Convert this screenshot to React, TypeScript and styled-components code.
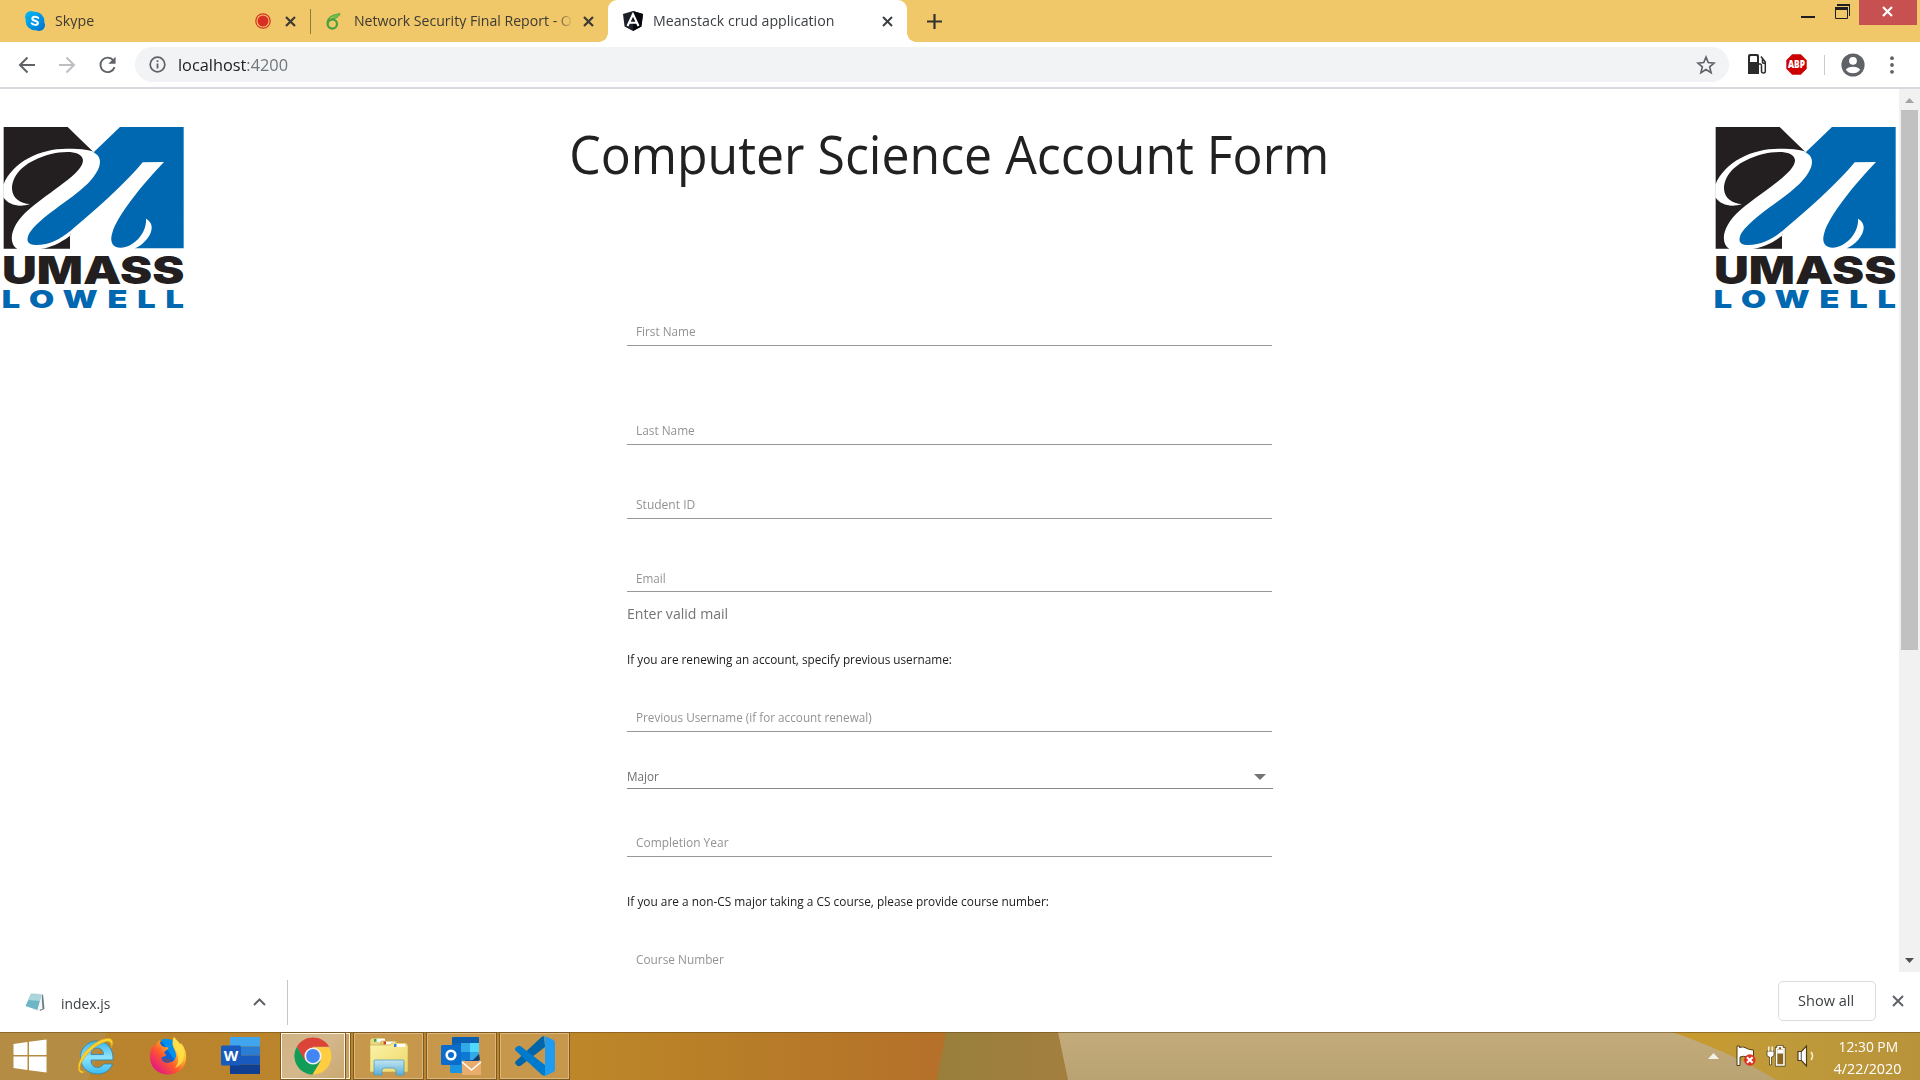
import React from "react";
import styled, { createGlobalStyle } from "styled-components";

const GlobalStyle = createGlobalStyle`
  * { box-sizing: border-box; }
  html, body { margin: 0; padding: 0; overflow: hidden; background: #fff; }
  body { font-family: "Open Sans", "Noto Sans", sans-serif; color: #212121; }
  svg { display: block; flex: none; }
`;

const Screen = styled.div`
  width: 1920px;
  height: 1080px;
  display: flex;
  flex-direction: column;
  overflow: hidden;
`;

const Text = styled.span<{ $size: number; $stretch?: number; $color?: string; $weight?: number }>`
  display: inline-block;
  font-size: ${(p) => p.$size}px;
  font-weight: ${(p) => p.$weight ?? 400};
  line-height: 20px;
  white-space: pre;
  color: ${(p) => p.$color ?? "#212121"};
  transform: scaleX(${(p) => p.$stretch ?? 1});
  transform-origin: left center;
`;

/* ---------- tab strip ---------- */

const TabStrip = styled.header`
  height: 42px;
  flex: none;
  display: flex;
  background: #f0c869;
`;

const Tab = styled.div<{ $width: number; $pad: number; $active?: boolean }>`
  position: relative;
  width: ${(p) => p.$width}px;
  height: 42px;
  padding-left: ${(p) => p.$pad}px;
  display: flex;
  align-items: center;
  background: ${(p) => (p.$active ? "#fff" : "transparent")};
  border-radius: ${(p) => (p.$active ? "9px 9px 0 0" : "0")};
  &::before, &::after {
    content: "";
    display: ${(p) => (p.$active ? "block" : "none")};
    position: absolute;
    bottom: 0;
    width: 9px;
    height: 9px;
  }
  &::before { left: -9px; background: radial-gradient(circle at 0 0, transparent 8.5px, #fff 9px); }
  &::after { right: -9px; background: radial-gradient(circle at 100% 0, transparent 8.5px, #fff 9px); }
`;

const TabLabel = styled.div<{ $width: number; $gap: number; $fade?: boolean }>`
  width: ${(p) => p.$width}px;
  margin-left: ${(p) => p.$gap}px;
  height: 20px;
  margin-top: -4px;
  overflow: hidden;
  ${(p) => p.$fade && "mask-image: linear-gradient(90deg, #000 93%, transparent 101%);"}
`;

const FileName = styled.div`
  width: 192px;
  height: 20px;
`;

const TabDivider = styled.div`
  width: 1px;
  height: 25px;
  margin: 9px 0 0;
  background: #8f7842;
`;

const Spacer = styled.div<{ $w?: number }>`
  ${(p) => (p.$w ? `width: ${p.$w}px; flex: none;` : "flex: 1;")}
`;

const NewTab = styled.div`
  display: flex;
  align-items: center;
  padding-left: 20px;
`;

const WindowControls = styled.div`
  display: flex;
  align-items: flex-start;
`;

const CloseWindow = styled.div`
  width: 58px;
  height: 25px;
  margin: 0 3px 0 9px;
  padding: 0 1px 2px 0;
  background: #c75050;
  display: flex;
  align-items: center;
  justify-content: center;
`;

const Cross = ({ size, color, weight }: { size: number; color: string; weight: number }) => (
  <svg width={size} height={size} viewBox={`0 0 ${size} ${size}`}>
    <path d={`M1 1L${size - 1} ${size - 1}M${size - 1} 1L1 ${size - 1}`} stroke={color} strokeWidth={weight} />
  </svg>
);

const SkypeIcon = () => (
  <svg width="20" height="20" viewBox="0 0 20 20">
    <defs>
      <linearGradient id="sky" x1="0" y1="0" x2="1" y2="1">
        <stop offset="0" stopColor="#00b7f0" />
        <stop offset="1" stopColor="#0078d4" />
      </linearGradient>
    </defs>
    <circle cx="6" cy="6" r="6" fill="#00b2ee" />
    <circle cx="14" cy="14" r="6" fill="#0078d4" />
    <circle cx="10" cy="10" r="9.3" fill="url(#sky)" />
    <path d="M13.2 6.9c-.9-1.2-5.6-1.9-5.9.6-.3 2.7 6 1.7 5.7 4.7-.3 2.4-4.9 2-6.3.2" fill="none" stroke="#fff" strokeWidth="2" strokeLinecap="round" />
  </svg>
);

const RecordIcon = () => (
  <svg width="16" height="16" viewBox="0 0 16 16">
    <circle cx="8" cy="8" r="7.2" fill="none" stroke="#d93025" strokeWidth="1.2" />
    <circle cx="8" cy="8" r="5.5" fill="#d93025" />
  </svg>
);

const OverleafIcon = () => (
  <svg width="15" height="17" viewBox="0 0 15 17">
    <circle cx="6.3" cy="11" r="4.700" fill="none" stroke="#47a141" strokeWidth="2.200" />
    <path d="M1.500 10.500C1 6 5 2 14 1C12 2 12 3.700 10.200 4.600C8 5.600 5.500 5 3.500 8" fill="none" stroke="#47a141" strokeWidth="1.500" />
    <path d="M5 4C8 1.600 11 1.200 14 1C12 2.400 12 4 9 5Z" fill="#6cc04a" />
  </svg>
);

const AngularIcon = () => (
  <svg width="20" height="20" viewBox="0 0 20 20">
    <path d="M10 0L20 3L18.4 15.5L10 20L1.6 15.5L0 3Z" fill="#1b2029" />
    <path d="M10 0L20 3L18.4 15.5L10 20Z" fill="#05070c" />
    <path d="M4.500 15L10 3.300L15.500 15M6.800 11.700H13.200" fill="none" stroke="#fff" strokeWidth="2.100" />
  </svg>
);

/* ---------- toolbar ---------- */

const Toolbar = styled.div`
  height: 47px;
  flex: none;
  display: flex;
  align-items: center;
  border-bottom: 2px solid #d9dae0;
  background: #fff;
`;

const NavButtons = styled.div`
  width: 135px;
  display: flex;
  align-items: center;
  gap: 22px;
  padding-left: 18px;
`;

const Omnibox = styled.div`
  width: 1594px;
  height: 35px;
  display: flex;
  align-items: center;
  border-radius: 18px;
  background: #f1f3f4;
  padding: 0 13px 0 14px;
`;

const ToolDivider = styled.div`
  width: 1px;
  height: 20px;
  background: #c9cbce;
`;

const Arrow = ({ color, flip }: { color: string; flip?: boolean }) => (
  <svg width="18" height="18" viewBox="0 0 18 18">
    <path
      d="M17 9H2.500M9.500 1.500L2 9L9.500 16.500"
      fill="none"
      stroke={color}
      strokeWidth="2"
      transform={flip ? "matrix(-1 0 0 1 18 0)" : undefined}
    />
  </svg>
);

const ReloadIcon = () => (
  <svg width="19" height="20" viewBox="0 0 20 20">
    <path d="M16.200 5.200A7.600 7.600 0 1 0 17.400 12.200" fill="none" stroke="#5f6368" strokeWidth="2" />
    <path d="M18.500 1.200V8.800H10.900Z" fill="#5f6368" />
  </svg>
);

const InfoIcon = () => (
  <svg width="17" height="17" viewBox="0 0 17 17">
    <circle cx="8.500" cy="8.500" r="7.300" fill="none" stroke="#5f6368" strokeWidth="1.700" />
    <path d="M8.500 7.500V12.600M8.500 4.300V6.100" stroke="#5f6368" strokeWidth="1.800" />
  </svg>
);

const StarIcon = () => (
  <svg width="20" height="20" viewBox="0 0 24 24">
    <path
      d="M12 2.600L14.700 9.100L21.800 9.700L16.400 14.300L18.100 21.200L12 17.500L5.900 21.200L7.600 14.300L2.200 9.700L9.300 9.100Z"
      fill="none"
      stroke="#5f6368"
      strokeWidth="2"
    />
  </svg>
);

const PumpIcon = () => (
  <svg width="19" height="21" viewBox="0 0 19 21">
    <path d="M2 0H9Q11 0 11 2V20H0V2Q0 0 2 0Z" fill="#2b2b2b" />
    <path d="M2 3Q2 2 3 2H8Q9 2 9 3V8H2Z" fill="#fff" />
    <path d="M11 10H12.500Q13.500 10 13.500 12V17Q13.500 19 15.500 19T17.300 17V8L13 2.500M14.500 5V8Q14.500 9.500 17.300 9.500" fill="none" stroke="#2b2b2b" strokeWidth="1.500" />
  </svg>
);

const AbpIcon = () => (
  <svg width="21" height="21" viewBox="0 0 21 21">
    <path d="M6.200 0.300H14.800L20.700 6.200V14.800L14.800 20.700H6.200L0.300 14.800V6.200Z" fill="#cc0000" />
    <text x="10.500" y="14.200" textAnchor="middle" textLength="17" lengthAdjust="spacingAndGlyphs" fontFamily="Open Sans, sans-serif" fontWeight="800" fontSize="10.500" fill="#fff">ABP</text>
  </svg>
);

const AvatarIcon = () => (
  <svg width="24" height="24" viewBox="0 0 24 24">
    <circle cx="12" cy="12" r="11.600" fill="#5f6368" />
    <circle cx="12" cy="7.800" r="3.900" fill="#fff" />
    <path d="M4.800 16.800Q7 13.800 12 13.800T19.200 16.800Q16.500 20.300 12 20.300T4.800 16.800Z" fill="#fff" />
  </svg>
);

const DotsIcon = () => (
  <svg width="4" height="18" viewBox="0 0 4 18">
    {[2.2, 9, 15.8].map((y) => (
      <circle key={y} cx="2" cy={y} r="1.900" fill="#5f6368" />
    ))}
  </svg>
);

/* ---------- page ---------- */

const Viewport = styled.main`
  height: 883px;
  flex: none;
  display: flex;
  background: #fff;
`;

const Page = styled.div`
  width: 1899px;
  height: 883px;
  overflow: hidden;
`;

const PageHeader = styled.div`
  height: 226px;
  display: flex;
  justify-content: space-between;
  padding-top: 30px;
`;

const LogoBox = styled.div`
  width: 187px;
  padding-top: 6px;
`;

const Title = styled.h1`
  margin: 0;
  font-size: 52.5px;
  font-weight: 400;
  line-height: 70px;
  white-space: nowrap;
  color: #212121;
  transform: scaleX(0.952);
`;

const Form = styled.form`
  width: 646px;
  margin-left: 627px;
`;

const Field = styled.div<{ $gap: number; $height?: number }>`
  width: 645px;
  height: ${(p) => p.$height ?? 25}px;
  margin-top: ${(p) => p.$gap}px;
  padding-left: 9px;
  border-bottom: 1px solid #979797;
  display: flex;
  align-items: flex-start;
`;

const SelectField = styled.div`
  height: 24px;
  margin-top: 33px;
  padding: 0 7px 2px 0;
  border-bottom: 1px solid #8a8a8a;
  display: flex;
  align-items: center;
  justify-content: space-between;
  & > svg { margin-top: 2px; }
`;

const Note = styled.div<{ $gap: number }>`
  height: 20px;
  margin-top: ${(p) => p.$gap}px;
  display: flex;
`;

const Scrollbar = styled.div`
  width: 21px;
  display: flex;
  flex-direction: column;
  align-items: center;
  justify-content: space-between;
  background: #f1f1f1;
  padding: 9px 0 9px;
`;

const Thumb = styled.div`
  width: 17px;
  height: 540px;
  margin: 7px 0 auto;
  background: #c1c1c1;
`;

const Triangle = ({ w, h, color, down }: { w: number; h: number; color: string; down?: boolean }) => (
  <svg width={w} height={h} viewBox={`0 0 ${w} ${h}`}>
    <path d={down ? `M0 0H${w}L${w / 2} ${h}Z` : `M0 ${h}H${w}L${w / 2} 0Z`} fill={color} />
  </svg>
);

const UmassLogo = () => (
  <svg width="187" height="185" viewBox="0 45 561 555">
    <path d="M11 51H203L281 127L210 377V416H11Z" fill="#231f20" />
    <path
      d="M10 224C38 155 120 116 200 116C250 116 272 120 281 126L298 150L210 377C178 402 150 412 122 417H52C25 400 28 350 85 300C150 243 250 190 249 150C245 122 195 122 150 133C80 152 36 190 36 237C38 265 60 281 90 282C60 292 28 288 10 262Z"
      fill="#fff"
    />
    <path
      d="M360 51H551V415H404C440 402 478 348 438 326C441 370 400 412 362 413C338 413 328 396 337 368C352 318 425 225 492 156L428 157C395 200 300 290 212 362C180 388 150 404 108 405C84 405 76 394 88 370C120 320 210 272 262 222C296 188 310 155 292 135L281 127Z"
      fill="#0067b1"
    />
    <text x="6" y="521" textLength="547" lengthAdjust="spacingAndGlyphs" fontFamily="Inter, Liberation Sans, sans-serif" fontWeight="900" fontSize="113" fill="#231f20">UMASS</text>
    <text transform="translate(5 594) scale(1.32 1)" textLength="414" lengthAdjust="spacing" fontFamily="Inter, Liberation Sans, sans-serif" fontWeight="900" fontSize="74" fill="#0067b1">LOWELL</text>
  </svg>
);

/* ---------- download shelf ---------- */

const Shelf = styled.div`
  height: 60px;
  flex: none;
  display: flex;
  align-items: center;
  padding-left: 25px;
  background: #fff;
`;

const ShelfDivider = styled.div`
  width: 1px;
  height: 45px;
  margin-left: 21px;
  background: #c6c6c6;
`;

const ShowAll = styled.div`
  width: 98px;
  height: 40px;
  margin: 0 16px 3px 0;
  padding: 0 0 2px 19px;
  display: flex;
  align-items: center;
  border: 1px solid #dadce0;
  border-radius: 5px;
`;

const CloseShelf = styled.div`
  margin: 0 16px 2px 0;
`;

const NotepadIcon = () => (
  <svg width="20" height="20" viewBox="0 0 20 20">
    <path d="M6 1L18 2L19 16L14 19L1 14Z" fill="#d9e5e8" />
    <path d="M18 2L19.500 17L15 19L17 4Z" fill="#6f7d80" />
    <path d="M6 2L16.500 3L12.500 18L0.500 14Z" fill="#6fb6c4" />
    <path d="M6 2L16.500 3L15 9L3.500 8Z" fill="#a9d7dd" />
    <path d="M12.500 18L16.500 4L17.500 17Z" fill="#f6f6f6" />
  </svg>
);

/* ---------- taskbar ---------- */

const TaskbarRoot = styled.footer`
  position: relative;
  height: 48px;
  flex: none;
  display: flex;
  overflow: hidden;
`;

const Wallpaper = styled.svg`
  position: absolute;
  inset: 0;
`;

const Launchers = styled.div`
  position: relative;
  width: 280px;
  padding: 0 0 1px 13px;
  display: flex;
  align-items: center;
`;

const TaskButton = styled.div<{ $active?: boolean; $width: number }>`
  position: relative;
  width: ${(p) => p.$width}px;
  height: 48px;
  margin-right: ${(p) => (p.$active ? 0 : 2)}px;
  display: flex;
  align-items: center;
  justify-content: center;
  border: 1px solid #7d5a22;
  box-shadow: inset 0 0 0 1px ${(p) => (p.$active ? "#fff4dc" : "#dcb67c")};
  background: ${(p) => (p.$active ? "linear-gradient(135deg, #d0b284, #d4b88c 50%, #c9a76f)" : "rgba(210, 170, 110, 0.5)")};
`;

const StackEdge = styled.div`
  position: relative;
  width: 5px;
  height: 48px;
  margin-right: 2px;
  border: 1px solid #7d5a22;
  border-left: 0;
  box-shadow: inset -1px 0 0 #fff4dc, inset 0 1px 0 #fff4dc, inset 0 -1px 0 #fff4dc;
  background: #c7a065;
`;

const Tray = styled.div`
  position: relative;
  display: flex;
  align-items: center;
  margin-left: auto;
  padding-right: 17px;
`;

const Clock = styled.div`
  width: 70px;
  padding-top: 2px;
  display: flex;
  flex-direction: column;
  align-items: center;
  gap: 2px;
  & > span { transform-origin: center; }
`;

const WindowsIcon = () => (
  <svg width="34" height="34" viewBox="0 0 34 34">
    <path d="M0.500 5L14.500 3V16H0.500ZM16 2.800L33.500 0.500V16H16ZM0.500 17.500H14.500V31L0.500 29ZM16 17.500H33.500V33.500L16 31.200Z" fill="#fff" />
  </svg>
);

const IeIcon = () => (
  <svg width="38" height="38" viewBox="0 0 38 38">
    <defs>
      <linearGradient id="ie" x1="0" y1="0" x2="0" y2="1">
        <stop offset="0" stopColor="#3db4ea" />
        <stop offset="0.500" stopColor="#8fe3fb" />
        <stop offset="1" stopColor="#3bbcf0" />
      </linearGradient>
    </defs>
    <path
      d="M37 23H15C15 28 18 30.500 21.500 30.500C24.500 30.500 26.500 29 27.500 27H36.500C34 33.500 28.500 37 21.500 37C12 37 4.500 30 4.500 20.500C4.500 11 12 4 21 4C31 4 37.500 11.500 37 23ZM15 17.500H27.500C27.500 13.500 25 11 21.300 11C17.500 11 15 13.500 15 17.500Z"
      fill="url(#ie)"
      stroke="#2287bd"
      strokeWidth="0.800"
    />
    <path d="M5 36C-1 33 3 20 13 11C22 2.500 33 -1 36 3C37.500 5 37 7.500 35 11C36 6 34 3.500 29 5C18 8 5 22 4 30C3.500 33 5 35 9 34.500C7.500 36 6 36.300 5 36Z" fill="#fbd32f" stroke="#d59a14" strokeWidth="0.600" />
  </svg>
);

const FirefoxIcon = () => (
  <svg width="38" height="38" viewBox="0 0 38 38">
    <defs>
      <linearGradient id="ff" x1="1" y1="0" x2="0.150" y2="0.900">
        <stop offset="0.100" stopColor="#fff44f" />
        <stop offset="0.400" stopColor="#ffb02a" />
        <stop offset="0.650" stopColor="#ff5a2a" />
        <stop offset="1" stopColor="#e31587" />
      </linearGradient>
    </defs>
    <circle cx="19" cy="17" r="14" fill="#0a64d8" />
    <path d="M12 3Q18 0 25 4L30 12L26 24Z" fill="#0090ed" />
    <path
      d="M25 0C28 4 30 6 31 8L32 6C36 11 37.500 16 37.200 21C36.500 31 29 37.500 19 37.500C9 37.500 1.500 30.500 1 21C0.800 15 2 10 5 7L6 11C6.500 8 8 5 10.500 3C10.500 6 12 8.500 14 9.500C16 10.300 18 10 19.500 10.700C19 13 16 13.500 15.500 15C15.200 17 17 17 17 18.500C16 20 12.500 19 12.500 21.500C13 25 17 26.500 20 25.500C24 25.500 27 22.500 27 18.500C27 13 23 10 23.500 6C23.500 3.500 24 1.500 25 0Z"
      fill="url(#ff)"
    />
    <path d="M25 0C29 5 35 8 35 18C35 25 31 29 26 31C29 27 30 23 28.500 18C27 12 22 9 25 0Z" fill="#ffe24a" opacity="0.850" />
    <path d="M13 21.500C14 25.500 20 26.500 24 23C21 24 20 20.500 13 21.500Z" fill="#b8341d" opacity="0.500" />
  </svg>
);

const WordIcon = () => (
  <svg width="39" height="37" viewBox="0 0 39 37">
    <rect x="9" y="0" width="30" height="9.500" fill="#41a5ee" />
    <rect x="9" y="9.500" width="30" height="9" fill="#2b7cd3" />
    <rect x="9" y="18.500" width="30" height="9" fill="#185abd" />
    <rect x="9" y="27.500" width="30" height="9.500" fill="#103f91" />
    <rect x="0" y="8.500" width="20" height="20" rx="1.500" fill="#185abd" />
    <text x="10" y="24" textAnchor="middle" fontFamily="Open Sans, sans-serif" fontWeight="700" fontSize="15" fill="#fff">W</text>
  </svg>
);

const ChromeIcon = () => (
  <svg width="38" height="38" viewBox="0 0 38 38">
    <path d="M2.900 9.700A18.600 18.600 0 0 1 35.100 9.700H19L10.500 24Z" fill="#db4437" />
    <path d="M2.900 9.700A18.600 18.600 0 0 0 19 37.600L27 24L11 23.500Z" fill="#0f9d58" />
    <path d="M35.100 10.200A18.600 18.600 0 0 1 18.500 37.600L27 23.500L20 10.200Z" fill="#ffcd40" />
    <circle cx="19" cy="19" r="8.600" fill="#f1f1f1" />
    <circle cx="19" cy="19" r="6.900" fill="#4285f4" />
  </svg>
);

const ExplorerIcon = () => (
  <svg width="40" height="39" viewBox="0 0 40 39">
    <defs>
      <linearGradient id="folder" x1="0" y1="0" x2="1" y2="1">
        <stop offset="0" stopColor="#fbf3a8" />
        <stop offset="1" stopColor="#edd768" />
      </linearGradient>
      <linearGradient id="dock" x1="0" y1="0" x2="0" y2="1">
        <stop offset="0" stopColor="#c4e6f3" />
        <stop offset="1" stopColor="#5aaed6" />
      </linearGradient>
    </defs>
    <path d="M3 1H15L17 4H28V10H1V3Z" fill="#e9d782" stroke="#b9a04a" strokeWidth="0.600" />
    <rect x="6" y="1.800" width="10" height="3" fill="#fff" />
    <rect x="5" y="1.800" width="2.500" height="3" fill="#37a84a" />
    <path d="M12 4H26L28 6H38V14H12Z" fill="#ead77c" stroke="#b9a04a" strokeWidth="0.600" />
    <rect x="16" y="4.800" width="10" height="2.800" fill="#fff" />
    <rect x="14.500" y="4.500" width="2.500" height="3" fill="#d83a25" />
    <path d="M1 8H21L23 6H37L39 9V35H1Z" fill="url(#folder)" stroke="#c0a547" strokeWidth="0.600" />
    <rect x="26" y="7" width="10" height="3" fill="#fff" />
    <rect x="25" y="7" width="2.500" height="3" fill="#2e86d1" />
    <path d="M5 24Q5 23 6 23H34Q35 23 35 24V38H27V34Q27 31 24 31H16Q13 31 13 34V38H5Z" fill="url(#dock)" stroke="#4e9dc2" strokeWidth="0.800" />
  </svg>
);

const OutlookIcon = () => (
  <svg width="41" height="39" viewBox="0 0 41 39">
    <rect x="11" y="0" width="27" height="24" rx="1" fill="#0a5fb0" />
    <rect x="11" y="6" width="9" height="9" fill="#1066b5" />
    <rect x="20" y="6" width="9" height="9" fill="#32a9e7" />
    <rect x="29" y="6" width="9" height="9" fill="#50d9ff" />
    <rect x="20" y="15" width="9" height="8" fill="#0f78d4" />
    <rect x="29" y="15" width="9" height="8" fill="#32a9e7" />
    <path d="M9 23H24V36H10Q9 36 9 35Z" fill="#1a93e0" />
    <rect x="0" y="8" width="20" height="20" rx="1.500" fill="#0b6ccc" />
    <circle cx="10" cy="18" r="4.300" fill="none" stroke="#fff" strokeWidth="2.600" />
    <path d="M38 17L39 23L31 24Z" fill="#123b6b" />
    <rect x="21" y="24" width="19" height="14" fill="#e8ad6d" />
    <path d="M21 25L30.500 33L40 25" fill="none" stroke="#fff" strokeWidth="1.600" />
  </svg>
);

const VsCodeIcon = () => (
  <svg width="40" height="40" viewBox="0 0 40 40">
    <path d="M29 0L30 11L6 29.500Q4 31 2 29.500L0.500 28Q-0.500 26.500 1 25L26.500 1Z" fill="#0065a9" />
    <path d="M0.500 12L2 10.500Q4 9 6 10.500L30 29V40L27 39L1 15Q-0.500 13.500 0.500 12Z" fill="#007acc" />
    <path d="M29 0.200Q30 0 31 0.500L38.500 4Q40 5 40 6.500V33.500Q40 35 38.500 36L31 39.500Q30 40 29 39.800Q30 39 30 37V3Q30 1 29 0.200Z" fill="#1f9cf0" />
  </svg>
);

const FlagIcon = () => (
  <svg width="20" height="22" viewBox="0 0 20 22">
    <path d="M1 1H3.500V2.500Q7 1 10 3T17.500 5V13Q13 13.500 10.500 12T4 12V20.500H1Z" fill="#fff" stroke="#4f3d15" strokeWidth="1" />
    <circle cx="13.800" cy="15" r="5.700" fill="#dd3327" />
    <path d="M11 12.200L16.600 17.800M16.600 12.200L11 17.800" stroke="#fff" strokeWidth="2" />
  </svg>
);

const BatteryIcon = () => (
  <svg width="20" height="22" viewBox="0 0 20 22">
    <path d="M1 6H8V10Q8 12 5.500 12V20H3.500V12Q1 12 1 10Z" fill="#fff" stroke="#4f3d15" strokeWidth="0.800" />
    <path d="M2.800 1.500V6M6.200 1.500V6" stroke="#fff" strokeWidth="1.300" />
    <path d="M10.500 3.500H12V1.500H16V3.500H18V20H10.500Z" fill="#fff" stroke="#4f3d15" strokeWidth="3" />
    <path d="M10.500 3.500H12V1.500H16V3.500H18V20H10.500Z" fill="#8a651d" stroke="#fff" strokeWidth="1.600" />
    <rect x="11.300" y="4.500" width="6" height="4" fill="#fff" />
  </svg>
);

const SpeakerIcon = () => (
  <svg width="18" height="22" viewBox="0 0 18 22">
    <path d="M1 6.500H4.500L9.500 1V21L4.500 15.500H1Z" fill="#fff" stroke="#4f3d15" strokeWidth="1.200" />
    <path d="M4.300 7V15" stroke="#6b6b6b" strokeWidth="1.200" />
    <path d="M14 7Q17 11 14 15" fill="none" stroke="#fff1cf" strokeWidth="1.500" />
  </svg>
);

const TaskbarWallpaper = () => (
  <Wallpaper width="1920" height="48" viewBox="0 0 1920 48">
    <defs>
      <linearGradient id="w1" gradientUnits="userSpaceOnUse" x1="0" y1="0" x2="946" y2="0">
        <stop offset="0" stopColor="#b98330" />
        <stop offset="0.620" stopColor="#bd8628" />
        <stop offset="0.800" stopColor="#b77c28" />
        <stop offset="1" stopColor="#b5702a" />
      </linearGradient>
      <linearGradient id="w2">
        <stop offset="0" stopColor="#997f3c" />
        <stop offset="1" stopColor="#a37f3e" />
      </linearGradient>
      <linearGradient id="w3" x1="0" y1="0" x2="0" y2="1">
        <stop offset="0" stopColor="#c3ab7b" />
        <stop offset="1" stopColor="#baa373" />
      </linearGradient>
      <linearGradient id="w4">
        <stop offset="0" stopColor="#c99a2c" />
        <stop offset="0.450" stopColor="#bf9a3a" />
        <stop offset="1" stopColor="#b8933a" />
      </linearGradient>
    </defs>
    <rect width="1920" height="48" fill="url(#w1)" />
    <path d="M0 0H107L88 48H0Z" fill="#b58c44" />
    <path d="M946 0H1060L1068 48H937Z" fill="url(#w2)" />
    <path d="M1058 0H1700L1790 48H1068Z" fill="url(#w3)" />
    <path d="M1672 0H1920V48H1776Q1735 22 1672 0Z" fill="url(#w4)" />
    <rect width="1920" height="1" fill="#6b4d18" opacity="0.550" />
  </Wallpaper>
);

export default function App() {
  return (
    <Screen>
      <GlobalStyle />
      <TabStrip>
        <Tab $width={310} $pad={25}>
          <SkypeIcon />
          <TabLabel $width={190} $gap={10}>
            <Text $size={15} $stretch={0.95} $color="#3c3a33">Skype</Text>
          </TabLabel>
          <Spacer $w={10} />
          <RecordIcon />
          <Spacer $w={14} />
          <Cross size={11} color="#3c3a33" weight={2.2} />
        </Tab>
        <TabDivider />
        <Tab $width={297} $pad={15}>
          <OverleafIcon />
          <TabLabel $width={217} $gap={13} $fade>
            <Text $size={15} $stretch={0.94} $color="#3c3a33">Network Security Final Report - O</Text>
          </TabLabel>
          <Spacer $w={12} />
          <Cross size={11} color="#3c3a33" weight={2.2} />
        </Tab>
        <Tab $width={299} $pad={15} $active>
          <AngularIcon />
          <TabLabel $width={219} $gap={10}>
            <Text $size={15} $stretch={0.945} $color="#3c4043">Meanstack crud application</Text>
          </TabLabel>
          <Spacer $w={10} />
          <Cross size={11} color="#3c4043" weight={2} />
        </Tab>
        <NewTab>
          <svg width="15" height="15" viewBox="0 0 15 15">
            <path d="M7.500 0V15M0 7.500H15" stroke="#33342f" strokeWidth="2.200" />
          </svg>
        </NewTab>
        <Spacer />
        <WindowControls>
          <svg width="14" height="18" viewBox="0 0 14 18">
            <rect y="16" width="14" height="2" fill="#1f1f1f" />
          </svg>
          <Spacer $w={20} />
          <svg width="15" height="19" viewBox="0 0 15 19">
            <path d="M2 4.500H14.500V16M2.500 4.500V6" fill="none" stroke="#1f1f1f" />
            <rect x="2" y="4" width="13" height="2" fill="#1f1f1f" />
            <path d="M0.500 8V18.500H12.500V8" fill="none" stroke="#1f1f1f" />
            <rect x="0" y="7" width="13" height="3" fill="#1f1f1f" />
          </svg>
          <CloseWindow>
            <Cross size={11} color="#fff" weight={2.2} />
          </CloseWindow>
        </WindowControls>
      </TabStrip>

      <Toolbar>
        <NavButtons>
          <Arrow color="#5f6368" />
          <Arrow color="#bcbec1" flip />
          <ReloadIcon />
        </NavButtons>
        <Omnibox>
          <InfoIcon />
          <Spacer $w={12} />
          <Text $size={17} $stretch={0.96} $color="#202124">
            localhost<Text as="span" $size={17} $color="#70757a">:4200</Text>
          </Text>
          <Spacer />
          <StarIcon />
        </Omnibox>
        <Spacer $w={19} />
        <PumpIcon />
        <Spacer $w={19} />
        <AbpIcon />
        <Spacer $w={17} />
        <ToolDivider />
        <Spacer $w={16} />
        <AvatarIcon />
        <Spacer $w={25} />
        <DotsIcon />
      </Toolbar>

      <Viewport>
        <Page>
          <PageHeader>
            <LogoBox><UmassLogo /></LogoBox>
            <Title>Computer Science Account Form</Title>
            <LogoBox><UmassLogo /></LogoBox>
          </PageHeader>
          <Form>
            <Field $gap={6}><Text $size={13} $stretch={0.905} $color="#939393">First Name</Text></Field>
            <Field $gap={74}><Text $size={13} $stretch={0.91} $color="#939393">Last Name</Text></Field>
            <Field $gap={49}><Text $size={13} $stretch={0.925} $color="#939393">Student ID</Text></Field>
            <Field $gap={49} $height={24}><Text $size={13} $stretch={0.9} $color="#939393">Email</Text></Field>
            <Note $gap={11}><Text $size={15} $stretch={0.94} $color="#757575">Enter valid mail</Text></Note>
            <Note $gap={26}><Text $size={13} $stretch={0.905}>If you are renewing an account, specify previous username:</Text></Note>
            <Field $gap={38}><Text $size={13} $stretch={0.902} $color="#939393">Previous Username (if for account renewal)</Text></Field>
            <SelectField>
              <Text $size={13} $stretch={0.9} $color="#6f6f6f">Major</Text>
              <Triangle w={12} h={6} color="#757575" down />
            </SelectField>
            <Field $gap={43}><Text $size={13} $stretch={0.918} $color="#939393">Completion Year</Text></Field>
            <Note $gap={34}><Text $size={13} $stretch={0.913}>If you are a non-CS major taking a CS course, please provide course number:</Text></Note>
            <Field $gap={38}><Text $size={13} $stretch={0.91} $color="#939393">Course Number</Text></Field>
          </Form>
        </Page>
        <Scrollbar>
          <Triangle w={9} h={5} color="#a3a3a3" />
          <Thumb />
          <Triangle w={9} h={5} color="#505050" down />
        </Scrollbar>
      </Viewport>

      <Shelf>
        <NotepadIcon />
        <Spacer $w={16} />
        <FileName>
          <Text $size={15} $stretch={0.925} $color="#3c4043">index.js</Text>
        </FileName>
        <svg width="13" height="8" viewBox="0 0 13 8">
          <path d="M1 7L6.500 1.500L12 7" fill="none" stroke="#5f6368" strokeWidth="2" />
        </svg>
        <ShelfDivider />
        <Spacer />
        <ShowAll><Text $size={15} $stretch={0.97} $color="#3c4043" $weight={500}>Show all</Text></ShowAll>
        <CloseShelf>
          <Cross size={12} color="#5f6368" weight={2} />
        </CloseShelf>
      </Shelf>

      <TaskbarRoot>
        <TaskbarWallpaper />
        <Launchers>
          <WindowsIcon />
          <Spacer $w={29} />
          <IeIcon />
          <Spacer $w={35} />
          <FirefoxIcon />
          <Spacer $w={34} />
          <WordIcon />
        </Launchers>
        <TaskButton $active $width={66}><ChromeIcon /></TaskButton>
        <StackEdge />
        <TaskButton $width={71}><ExplorerIcon /></TaskButton>
        <TaskButton $width={71}><OutlookIcon /></TaskButton>
        <TaskButton $width={71}><VsCodeIcon /></TaskButton>
        <Tray>
          <Triangle w={11} h={6} color="#f4f1ea" />
          <Spacer $w={17} />
          <FlagIcon />
          <Spacer $w={10} />
          <BatteryIcon />
          <Spacer $w={11} />
          <SpeakerIcon />
          <Spacer $w={18} />
          <Clock>
            <Text $size={15} $stretch={0.92} $color="#fff">12:30 PM</Text>
            <Text $size={15} $stretch={0.955} $color="#fff">4/22/2020</Text>
          </Clock>
        </Tray>
      </TaskbarRoot>
    </Screen>
  );
}
